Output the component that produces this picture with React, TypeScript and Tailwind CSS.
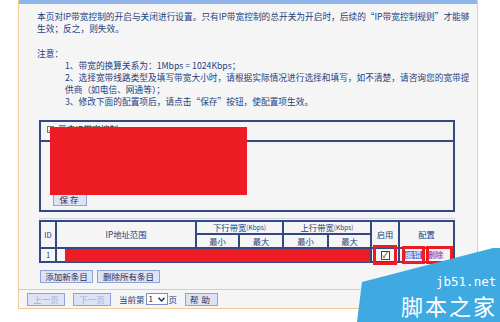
const btn =
  "h-[13px] flex items-center justify-center bg-[#dde3f4] border border-[#8ea4d6] text-[8.5px] leading-none whitespace-nowrap";

export default function App() {
  return (
    <div className="relative w-[500px] h-[322px] overflow-hidden bg-white font-['Noto_Sans_CJK_SC','Noto_Sans',sans-serif] text-[#24407e]">
      <div className="ml-[18px] w-[460px] h-[309px] flex flex-col bg-[#f5f5f6] border-x border-b border-[#f2c896]">
        <div className="h-[4px] bg-[#8fb4ea]" />

        {/* intro */}
        <div className="pl-[18px] pt-[7px] text-[8.7px] leading-[12px] whitespace-nowrap">
          <p>本页对IP带宽控制的开启与关闭进行设置。只有IP带宽控制的总开关为开启时，后续的“IP带宽控制规则”才能够</p>
          <p>生效；反之，则失效。</p>
          <p className="mt-[13px]">注意：</p>
          <div className="pl-[28px]">
            <p>1、带宽的换算关系为：1Mbps = 1024Kbps；</p>
            <p>2、选择宽带线路类型及填写带宽大小时，请根据实际情况进行选择和填写，如不清楚，请咨询您的宽带提</p>
            <p>供商（如电信、网通等）；</p>
            <p>3、修改下面的配置项后，请点击“保存”按钮，使配置项生效。</p>
          </div>
        </div>

        {/* switch box */}
        <div className="mt-[12px] ml-[20px] w-[416px] h-[92px] flex flex-col border-2 border-[#34497f]">
          <div className="h-[20px] flex items-start gap-[4px] pl-[6px] pt-[4px] border-b-2 border-[#34497f]">
            <span className="w-[7px] h-[7px] border border-[#777] bg-white text-[6px] leading-[6px] text-[#333] flex items-center justify-center">
              ✓
            </span>
            <span className="text-[8.7px] leading-[8px] text-[#222]">开启IP带宽控制</span>
          </div>
          <div className="flex-1 flex items-end pl-[12px] pb-[4px]">
            <div className={btn + " w-[34px] h-[12px] text-[#1f2d5c] tracking-[2px]"}>保存</div>
          </div>
        </div>

        <div className="mt-[6px] ml-[20px] w-[416px] h-px bg-[#c9d3ea]" />

        {/* rules table */}
        <div className="mt-px ml-[20px] w-[416px] grid grid-cols-[14px_138px_41px_42px_43px_41px_26px_53px] grid-rows-[11px_12px_12px] gap-[2px] p-[2px] bg-[#34497f] text-[8.3px] leading-none">
          <div className="row-span-2 bg-[#f5f5f6] flex items-center justify-center text-[7.5px]">ID</div>
          <div className="row-span-2 bg-[#f5f5f6] flex items-center justify-center">IP地址范围</div>
          <div className="col-span-2 bg-[#f5f5f6] flex items-center justify-center">
            下行带宽<span className="text-[6.5px]">(Kbps)</span>
          </div>
          <div className="col-span-2 bg-[#f5f5f6] flex items-center justify-center">
            上行带宽<span className="text-[6.5px]">(Kbps)</span>
          </div>
          <div className="row-span-2 bg-[#f5f5f6] flex items-center justify-center">启用</div>
          <div className="row-span-2 bg-[#f5f5f6] flex items-center justify-center">配置</div>
          <div className="bg-[#f5f5f6] flex items-center justify-center">最小</div>
          <div className="bg-[#f5f5f6] flex items-center justify-center">最大</div>
          <div className="bg-[#f5f5f6] flex items-center justify-center">最小</div>
          <div className="bg-[#f5f5f6] flex items-center justify-center">最大</div>

          <div className="bg-[#f5f5f6] flex items-center justify-center text-[7.5px]">1</div>
          <div className="bg-[#f5f5f6]" />
          <div className="bg-[#f5f5f6]" />
          <div className="bg-[#f5f5f6]" />
          <div className="bg-[#f5f5f6]" />
          <div className="bg-[#f5f5f6]" />
          <div className="bg-[#f5f5f6] flex items-center justify-center">
            <span className="w-[9px] h-[9px] border border-[#444] bg-white text-[8px] leading-[8px] text-[#222] flex items-center justify-center">
              ✓
            </span>
          </div>
          <div className="bg-[#f5f5f6] flex items-center gap-[4px] pl-[4px]">
            <span className="px-px bg-[#4a5fd4] text-white text-[8px]">编辑</span>
            <span className="px-px bg-[#eedcf0] text-[#8a2aa0] text-[8px]">删除</span>
          </div>
        </div>

        <div className="mt-[7px] ml-[21px] flex gap-[4px] text-[#1f2d5c]">
          <div className={btn + " w-[53px]"}>添加新条目</div>
          <div className={btn + " w-[63px]"}>删除所有条目</div>
        </div>

        {/* pager */}
        <div className="mt-[6px] h-[19px] border-t border-[#f2c896] flex items-center pl-[8px] text-[8.5px] whitespace-nowrap">
          <div className={btn + " w-[38px] text-[#9fb0d4]"}>上一页</div>
          <div className={btn + " w-[38px] ml-[8px] text-[#9fb0d4]"}>下一页</div>
          <span className="ml-[8px]">当前第</span>
          <div className="ml-px w-[22px] h-[12px] bg-white border border-[#7a8fc4] flex items-center justify-between px-[2px] text-[8px] text-[#222]">
            <span>1</span>
            <svg width="7" height="5" viewBox="0 0 7 5">
              <path d="M0.5 0.8 L3.5 4 L6.5 0.8" fill="none" stroke="#1f2d5c" strokeWidth="1.4" />
            </svg>
          </div>
          <span className="ml-px">页</span>
          <div className={btn + " w-[33px] ml-[8px] text-[#1f2d5c] tracking-[3px]"}>帮助</div>
        </div>
      </div>

      {/* redactions and highlights */}
      <div className="absolute left-[50px] top-[127px] w-[197px] h-[68px] bg-[#ed1c24]" />
      <div className="absolute left-[65px] top-[249px] w-[305px] h-[13px] bg-[#ed1c24]" />
      <div className="absolute left-[373px] top-[245px] w-[24px] h-[20px] border-[3px] border-[#ed1c24]" />
      <div className="absolute left-[402px] top-[246px] w-[23px] h-[18px] border-[3px] border-[#ed1c24]" />
      <div className="absolute left-[426px] top-[246px] w-[27px] h-[18px] border-[3px] border-[#ed1c24]" />

      {/* watermark */}
      <svg className="absolute right-0 bottom-0" width="143" height="74" viewBox="0 0 143 74">
        <polygon points="0,74 5,34 136,0 143,0 143,74" fill="#3fa9e2" />
      </svg>
      <div className="absolute left-[436px] top-[276px] text-[12.5px] leading-[12px] text-white font-['DejaVu_Sans_Mono',monospace]">
        jb51.net
      </div>
      <div className="absolute left-[401px] top-[295px] text-[22px] leading-[21px] tracking-[2px] text-white font-['Noto_Sans_CJK_SC',sans-serif]">
        脚本之家
      </div>
    </div>
  );
}
